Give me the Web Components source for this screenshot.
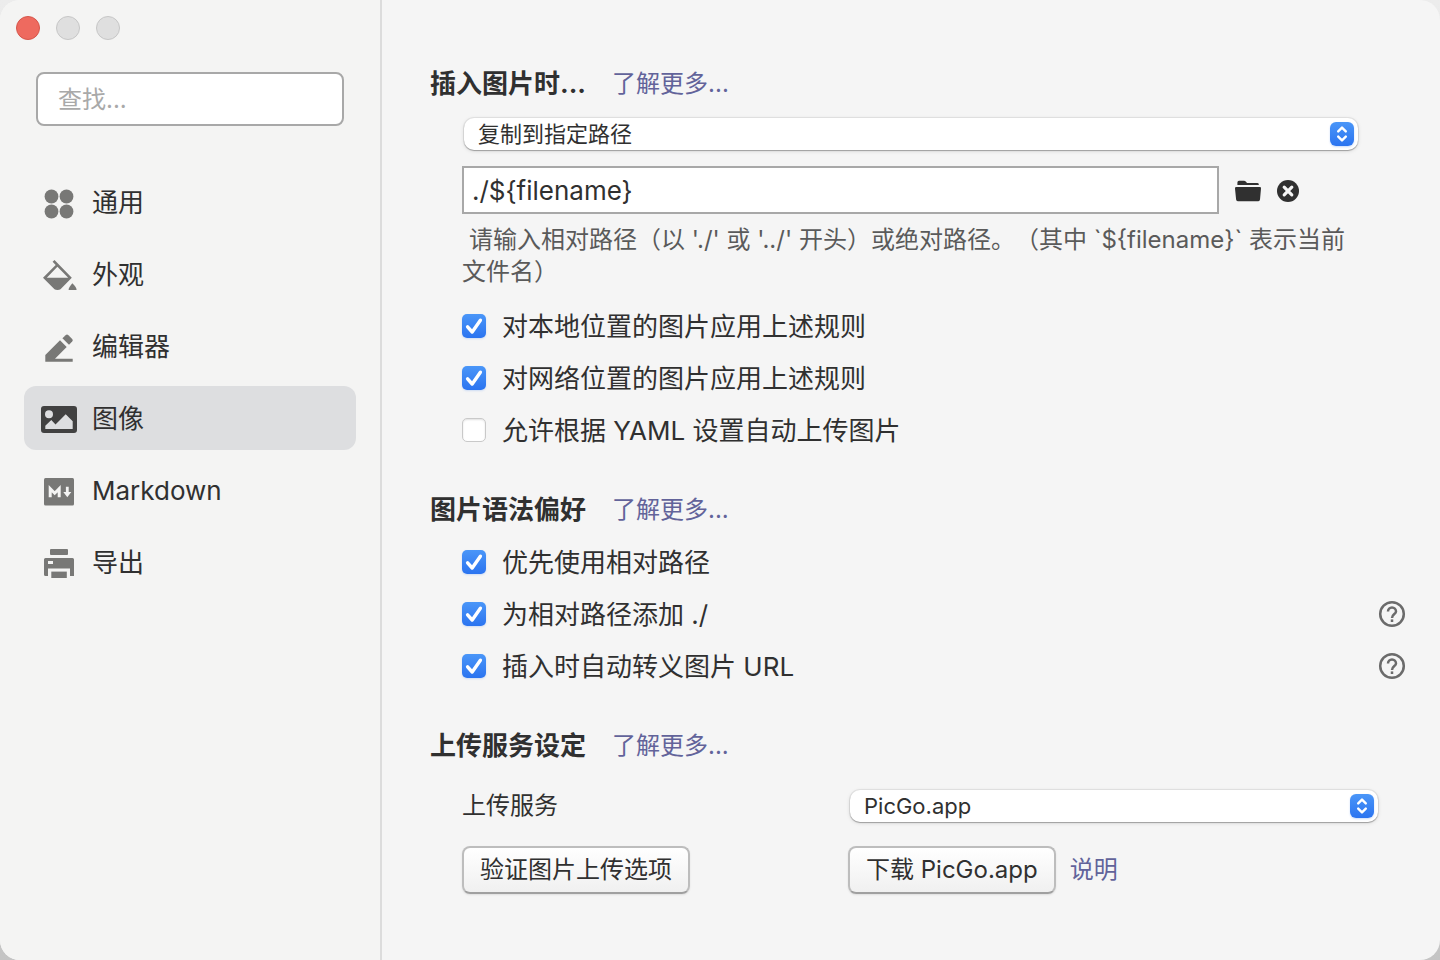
<!DOCTYPE html>
<html lang="zh-CN">
<head>
<meta charset="utf-8">
<title>偏好设置</title>
<style>
  html { background: linear-gradient(#ececec, #c4c4c4); }
  body {
    margin: 0;
    color: #303030;
    font: 26px/32px Inter, "Noto Sans CJK SC", sans-serif;
    text-spacing-trim: space-all;
  }
</style>
</head>
<body>
<prefs-window>
  <prefs-sidebar slot="sidebar">
    <nav-item icon="general">通用</nav-item>
    <nav-item icon="bucket">外观</nav-item>
    <nav-item icon="pencil">编辑器</nav-item>
    <nav-item icon="image" current>图像</nav-item>
    <nav-item icon="markdown">Markdown</nav-item>
    <nav-item icon="printer">导出</nav-item>
  </prefs-sidebar>

  <prefs-section heading="插入图片时...">
    <insert-rule></insert-rule>
    <check-row checked>对本地位置的图片应用上述规则</check-row>
    <check-row checked>对网络位置的图片应用上述规则</check-row>
    <check-row>允许根据 YAML 设置自动上传图片</check-row>
  </prefs-section>

  <prefs-section heading="图片语法偏好">
    <check-row checked>优先使用相对路径</check-row>
    <check-row checked help>为相对路径添加 ./</check-row>
    <check-row checked help>插入时自动转义图片 URL</check-row>
  </prefs-section>

  <prefs-section heading="上传服务设定">
    <upload-service></upload-service>
  </prefs-section>
</prefs-window>

<script>
const BASE = `
  *, *::before { box-sizing: border-box; }
  a { color: #62639a; text-decoration: none; }
  button, input, select { font: inherit; color: inherit; margin: 0; }
  svg { display: block; }
`;

class BaseElement extends HTMLElement {
  connectedCallback() {
    if (this.shadowRoot) return;
    this.attachShadow({ mode: "open" }).innerHTML =
      `<style>${BASE}${this.styles()}</style>${this.markup()}`;
  }
}

const ICONS = {
  general: `<circle cx="11.5" cy="12.5" r="6.9"/><circle cx="26.5" cy="12.5" r="6.9"/>
    <circle cx="11.5" cy="27.5" r="6.9"/><circle cx="26.5" cy="27.5" r="6.9"/>`,
  bucket: `<path fill-rule="evenodd" d="M14.5 4 31.8 21.7 20.5 33.2Q19.5 34 17.5 34T14.5 33.2L3 21.7 15.7 8.9 12.6 5.8ZM17.4 10.7 6.8 21.7H28.2Z"/>
    <path d="M32.4 27.3Q36.6 31.3 36.6 34H28.6Q28.6 31.3 32.4 27.3Z"/>`,
  pencil: `<path d="M5.3 27 20 12.3 26.7 19 15 30.7H32.7V33.7H5.3Z"/>
    <path d="M22.4 10.2 25.6 7.2Q27 6 28.4 7.2L32.2 11Q33.4 12.3 32.2 13.6L29 16.8Z"/>`,
  image: `<path fill-rule="evenodd" d="M4 6H34Q37 6 37 9V30Q37 33 34 33H4Q1 33 1 30V9Q1 6 4 6ZM9 10.3A4 4 0 1 0 9 18.3 4 4 0 1 0 9 10.3ZM5.3 29H32.7V21.3L25.7 14.3 15.5 24.4 11.3 20 5.3 25.8Z"/>`,
  markdown: `<rect x="4" y="6" width="30" height="27.5" rx="1.5"/>
    <path d="M10.2 25.3V16.6L14.7 21.2 19.2 16.6V25.3" fill="none" stroke="#f4f4f3" stroke-width="3"/>
    <path d="M25.9 14.8H28.7V20H31.3L27.3 25.2 23.3 20H25.9Z" fill="#f4f4f3"/>`,
  printer: `<rect x="10" y="5" width="18" height="6" rx="1"/>
    <path fill-rule="evenodd" d="M5.5 14H32.5Q34 14 34 15.5V32H30V24.5H8V32H5.5Q4 32 4 30.5V15.5Q4 14 5.5 14ZM8 17V20H13V17Z"/>
    <rect x="11.3" y="27.6" width="15.5" height="6.4"/>`
};

customElements.define("prefs-window", class extends BaseElement {
  styles() { return `
    :host { display: grid; grid-template-columns: 382px minmax(0, 1fr); min-height: 100vh;
      background: #f5f5f5; border-radius: 20px; overflow: hidden; }
    main { display: flex; flex-direction: column; gap: 38px; padding: 68px 34px 64px 48px; }
  `; }
  markup() { return `<slot name="sidebar"></slot><main><slot></slot></main>`; }
});

customElements.define("prefs-sidebar", class extends BaseElement {
  styles() { return `
    :host { display: block; background: #f4f4f3; border-right: 2px solid #dcdcdc; }
    .lights { display: flex; gap: 16px; padding: 16px; }
    .lights button { width: 24px; height: 24px; padding: 0; border: 1px solid #c6c6c6; border-radius: 50%; background: #dfdfdf; }
    .lights .close { background: #ee6a5f; border-color: #d5564b; }
    input { display: block; width: calc(100% - 72px); height: 54px; margin: 16px 36px 44px; padding: 0 20px;
      border: 2px solid #a8a8a8; border-radius: 8px; background: #fff; font-size: 24px; outline: 0; }
    input::placeholder { color: #a9a9a9; opacity: 1; }
    nav { display: flex; flex-direction: column; gap: 8px; padding: 0 24px; }
  `; }
  markup() { return `
    <div class="lights">
      <button class="close" aria-label="关闭"></button>
      <button aria-label="最小化"></button>
      <button aria-label="缩放"></button>
    </div>
    <input type="text" placeholder="查找..." aria-label="查找">
    <nav><slot></slot></nav>
  `; }
});

customElements.define("nav-item", class extends BaseElement {
  styles() { return `
    :host { display: block; }
    a { display: flex; align-items: center; gap: 14px; height: 64px; padding: 0 16px; border-radius: 12px; color: #303030; }
    span { padding-top: 2px; }
    svg { fill: #787876; }
    :host([current]) a { background: #dddee0; }
    :host([current]) svg { fill: #414141; }
  `; }
  markup() { return `
    <a href="#${this.getAttribute("icon")}">
      <svg width="38" height="36" viewBox="0 0 38 36" aria-hidden="true">${ICONS[this.getAttribute("icon")]}</svg>
      <span><slot></slot></span>
    </a>`; }
});

customElements.define("prefs-section", class extends BaseElement {
  styles() { return `
    :host { display: block; }
    header { display: flex; align-items: center; gap: 26px; margin-bottom: 10px; }
    h2 { margin: 0; font-size: 26px; font-weight: 700; }
    a { font-size: 24px; }
    .body { padding-left: 32px; }
  `; }
  markup() { return `
    <header><h2>${this.getAttribute("heading")}</h2><a href="#more">了解更多...</a></header>
    <div class="body"><slot></slot></div>`; }
});

customElements.define("pop-up", class extends BaseElement {
  styles() { return `
    :host { display: grid; align-items: center; padding-left: 2px; }
    select { grid-area: 1 / 1; width: 100%; height: 32px; padding: 0 48px 0 14px; border: 0; border-radius: 10px;
      appearance: none; background: #fff; font-size: 22px; outline: 0;
      box-shadow: 0 0 0 1px #0000000f, 0 1px 1px #00000040, 0 1px 4px #00000020; }
    .arrows { grid-area: 1 / 1; justify-self: end; margin-right: 4px; border-radius: 6px; pointer-events: none;
      background: linear-gradient(#4a96f8, #2b74f0); box-shadow: 0 1px 2px #2b74f040; }
  `; }
  markup() { return `
    <select aria-label="${this.getAttribute("name")}"><option>${this.getAttribute("value")}</option></select>
    <svg class="arrows" width="24" height="24" viewBox="0 0 24 24" fill="none" stroke="#fff" stroke-width="2.4"
      stroke-linecap="round" stroke-linejoin="round" aria-hidden="true"><path d="M8.2 9.4 12 5.6 15.8 9.4M8.2 14.6 12 18.4 15.8 14.6"/></svg>`; }
});

customElements.define("insert-rule", class extends BaseElement {
  styles() { return `
    :host { display: block; padding: 8px 0 12px; }
    pop-up { margin-right: 48px; }
    .path { display: flex; align-items: center; margin: 16px 106px 10px 0; }
    input { flex: 1; min-width: 0; height: 48px; padding: 0 8px; border: 2px solid #a8a8a8; background: #fff; outline: 0; }
    button { padding: 2px 0 0; border: 0; background: none; }
    .folder { margin-left: 15px; }
    .clear { margin-left: 14px; }
    p { margin: 0 40px 0 0; color: #5a5a5a; font-size: 24px; text-indent: 7px; }
  `; }
  markup() { return `
    <pop-up name="插入图片时" value="复制到指定路径"></pop-up>
    <div class="path">
      <input type="text" value="./\${filename}" aria-label="路径">
      <button class="folder" aria-label="选择文件夹">
        <svg width="28" height="24" viewBox="0 0 28 24" fill="#303030"><path d="M3.4 6V3.5Q3.4 1.7 5 1.7H10Q11 1.7 12 2.8L13 4H23.2Q24.8 4 24.8 5.4V6ZM2.2 8H25.8Q27.2 8 27 9.4L26 20.6Q25.8 22.3 24.4 22.3H3.8Q2.3 22.3 2.1 20.6L1 9.4Q.9 8 2.2 8Z"/></svg>
      </button>
      <button class="clear" aria-label="清除">
        <svg width="24" height="24" viewBox="0 0 24 24"><circle cx="12" cy="12" r="11" fill="#303030"/><path d="M8.2 8.2 15.8 15.8M15.8 8.2 8.2 15.8" stroke="#f5f5f5" stroke-width="3.2" stroke-linecap="round"/></svg>
      </button>
    </div>
    <p>请输入相对路径（以 './' 或 '../' 开头）或绝对路径。（其中 \`\${filename}\` 表示当前文件名）</p>`; }
});

customElements.define("check-row", class extends BaseElement {
  styles() { return `
    :host { display: flex; align-items: center; justify-content: space-between; height: 52px; }
    label { display: flex; align-items: center; gap: 16px; }
    .text { padding-top: 2px; }
    .box { display: grid; }
    input { grid-area: 1 / 1; appearance: none; width: 24px; height: 24px; border-radius: 5px; background: #fff;
      border: 1px solid #c9c9c9; box-shadow: inset 0 1px 2px #00000020; }
    input:checked { border: 0; background: linear-gradient(#4a96f8, #2b74f0); box-shadow: 0 1px 2px #2b74f030; }
    .box svg { grid-area: 1 / 1; z-index: 1; pointer-events: none; visibility: hidden; }
    input:checked + svg { visibility: visible; }
    button { padding: 0; border: 0; background: none; }
  `; }
  markup() { return `
    <label>
      <span class="box">
        <input type="checkbox"${this.hasAttribute("checked") ? " checked" : ""}>
        <svg width="24" height="24" viewBox="0 0 24 24" fill="none" stroke="#fff" stroke-width="3.4" stroke-linecap="round" stroke-linejoin="round" aria-hidden="true"><path d="M5.6 12.8 10.2 18 18.4 6.2"/></svg>
      </span>
      <span class="text"><slot></slot></span>
    </label>
    ${this.hasAttribute("help") ? `<button aria-label="帮助">
      <svg width="28" height="28" viewBox="0 0 28 28" fill="none" stroke="#6b6b6b" stroke-width="2.5"><circle cx="14" cy="14" r="11.8"/><path d="M10 11.4A4 4 0 0 1 18 11.4C18 14 14 14.2 14 18"/><path d="M14 19.4V22"/></svg>
    </button>` : ""}`; }
});

customElements.define("upload-service", class extends BaseElement {
  styles() { return `
    :host { display: grid; grid-template-columns: 386px minmax(0, 1fr); row-gap: 24px; align-items: center;
      margin-right: 28px; padding-top: 18px; font-size: 24px; }
    button { height: 48px; padding: 0 16px; border: 2px solid #bdbdbd; border-bottom-color: #a0a0a0; border-radius: 8px;
      background: linear-gradient(#fff, #f0f0f0); box-shadow: 0 1px 2px #00000018; white-space: nowrap; }
    .actions { display: flex; align-items: center; gap: 14px; }
  `; }
  markup() { return `
    <span>上传服务</span>
    <pop-up name="上传服务" value="PicGo.app"></pop-up>
    <div><button>验证图片上传选项</button></div>
    <div class="actions"><button>下载 PicGo.app</button><a href="#docs">说明</a></div>`; }
});
</script>
</body>
</html>
